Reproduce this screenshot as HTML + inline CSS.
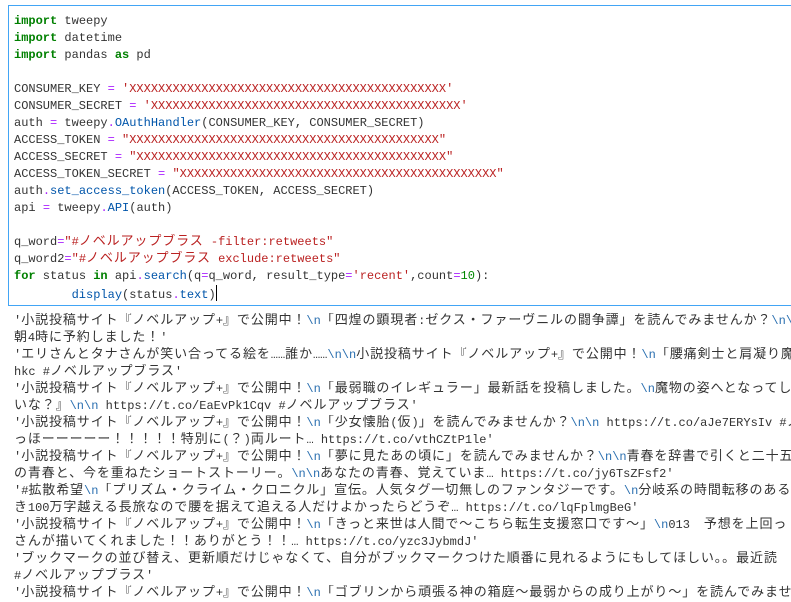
<!DOCTYPE html>
<html><head><meta charset="utf-8"><style>
html,body{margin:0;padding:0;background:#fff;width:791px;height:601px;overflow:hidden}
body{font-family:"Liberation Mono","Noto Sans CJK JP",monospace;font-size:12px;color:#333}
.cell{position:absolute;left:8px;top:5px;width:800px;height:299px;border:1px solid #42a5f5;background:#fff}
.code{position:absolute;left:5px;top:7px}
.l{height:17px;line-height:17px;white-space:pre;overflow:hidden}
j{font-family:"Noto Sans CJK JP",sans-serif;font-size:13px;letter-spacing:0.9px;line-height:0}
.k{color:#008000;font-weight:bold}
.o{color:#aa22ff}
.s{color:#ba2121}
.f{color:#0055aa}
.n{color:#008800}
.out{position:absolute;left:14px;top:313px;width:777px;overflow:hidden}
.e{color:#2a6fb0}
.cur{display:inline-block;width:1px;height:16px;background:#000;vertical-align:-3px}
</style></head><body>
<div class="cell"><div class="code">
<div class="l"><span class="k">import</span> tweepy</div>
<div class="l"><span class="k">import</span> datetime</div>
<div class="l"><span class="k">import</span> pandas <span class="k">as</span> pd</div>
<div class="l"> </div>
<div class="l">CONSUMER_KEY <span class="o">=</span> <span class="s">'XXXXXXXXXXXXXXXXXXXXXXXXXXXXXXXXXXXXXXXXXXXX'</span></div>
<div class="l">CONSUMER_SECRET <span class="o">=</span> <span class="s">'XXXXXXXXXXXXXXXXXXXXXXXXXXXXXXXXXXXXXXXXXXX'</span></div>
<div class="l">auth <span class="o">=</span> tweepy<span class="o">.</span><span class="f">OAuthHandler</span>(CONSUMER_KEY, CONSUMER_SECRET)</div>
<div class="l">ACCESS_TOKEN <span class="o">=</span> <span class="s">"XXXXXXXXXXXXXXXXXXXXXXXXXXXXXXXXXXXXXXXXXXX"</span></div>
<div class="l">ACCESS_SECRET <span class="o">=</span> <span class="s">"XXXXXXXXXXXXXXXXXXXXXXXXXXXXXXXXXXXXXXXXXXX"</span></div>
<div class="l">ACCESS_TOKEN_SECRET <span class="o">=</span> <span class="s">"XXXXXXXXXXXXXXXXXXXXXXXXXXXXXXXXXXXXXXXXXXXX"</span></div>
<div class="l">auth<span class="o">.</span><span class="f">set_access_token</span>(ACCESS_TOKEN, ACCESS_SECRET)</div>
<div class="l">api <span class="o">=</span> tweepy<span class="o">.</span><span class="f">API</span>(auth)</div>
<div class="l"> </div>
<div class="l">q_word<span class="o">=</span><span class="s">"#<j>ノベルアップブラス</j> -filter:retweets"</span></div>
<div class="l">q_word2<span class="o">=</span><span class="s">"#<j>ノベルアップブラス</j> exclude:retweets"</span></div>
<div class="l"><span class="k">for</span> status <span class="k">in</span> api<span class="o">.</span><span class="f">search</span>(q<span class="o">=</span>q_word, result_type<span class="o">=</span><span class="s">'recent'</span>,count<span class="o">=</span><span class="n">10</span>):</div>
<div class="l">        <span class="f">display</span>(status<span class="o">.</span><span class="f">text</span>)<span class="cur"></span></div>
</div></div>
<div class="out">
<div class="l">'<j>小説投稿サイト『ノベルアップ</j>+<j>』で公開中！</j><span class="e">\n</span><j>「四煌の顕現者</j>:<j>ゼクス・ファーヴニルの闘争譚」を読んでみませんか？</j><span class="e">\n\n</span></div>
<div class="l"><j>朝</j>4<j>時に予約しました！</j>'</div>
<div class="l">'<j>エリさんとタナさんが笑い合ってる絵を</j>……<j>誰か</j>……<span class="e">\n\n</span><j>小説投稿サイト『ノベルアップ</j>+<j>』で公開中！</j><span class="e">\n</span><j>「腰痛剣士と肩凝り魔</j></div>
<div class="l">hkc #<j>ノベルアップブラス</j>'</div>
<div class="l">'<j>小説投稿サイト『ノベルアップ</j>+<j>』で公開中！</j><span class="e">\n</span><j>「最弱職のイレギュラー」最新話を投稿しました。</j><span class="e">\n</span><j>魔物の姿へとなってし</j></div>
<div class="l"><j>いな？』</j><span class="e">\n\n</span> https://t.co/EaEvPk1Cqv #<j>ノベルアップブラス</j>'</div>
<div class="l">'<j>小説投稿サイト『ノベルアップ</j>+<j>』で公開中！</j><span class="e">\n</span><j>「少女懐胎</j>(<j>仮</j>)<j>」を読んでみませんか？</j><span class="e">\n\n</span> https://t.co/aJe7ERYsIv #<j>ノ</j></div>
<div class="l"><j>っほーーーーー！！！！！特別に</j>(<j>？</j>)<j>両ルート</j>… https://t.co/vthCZtP1le'</div>
<div class="l">'<j>小説投稿サイト『ノベルアップ</j>+<j>』で公開中！</j><span class="e">\n</span><j>「夢に見たあの頃に」を読んでみませんか？</j><span class="e">\n\n</span><j>青春を辞書で引くと二十五</j></div>
<div class="l"><j>の青春と、今を重ねたショートストーリー。</j><span class="e">\n\n</span><j>あなたの青春、覚えていま</j>… https://t.co/jy6TsZFsf2'</div>
<div class="l">'#<j>拡散希望</j><span class="e">\n</span><j>「プリズム・クライム・クロニクル」宣伝。人気タグ一切無しのファンタジーです。</j><span class="e">\n</span><j>分岐系の時間転移のある</j></div>
<div class="l"><j>き</j>100<j>万字越える長旅なので腰を据えて追える人だけよかったらどうぞ</j>… https://t.co/lqFplmgBeG'</div>
<div class="l">'<j>小説投稿サイト『ノベルアップ</j>+<j>』で公開中！</j><span class="e">\n</span><j>「きっと来世は人間で〜こちら転生支援窓口です〜」</j><span class="e">\n</span>013<j>　予想を上回っ</j></div>
<div class="l"><j>さんが描いてくれました！！ありがとう！！</j>… https://t.co/yzc3JybmdJ'</div>
<div class="l">'<j>ブックマークの並び替え、更新順だけじゃなくて、自分がブックマークつけた順番に見れるようにもしてほしい。。最近読</j></div>
<div class="l">#<j>ノベルアップブラス</j>'</div>
<div class="l">'<j>小説投稿サイト『ノベルアップ</j>+<j>』で公開中！</j><span class="e">\n</span><j>「ゴブリンから頑張る神の箱庭〜最弱からの成り上がり〜」を読んでみませ</j></div>
</div>
</body></html>
